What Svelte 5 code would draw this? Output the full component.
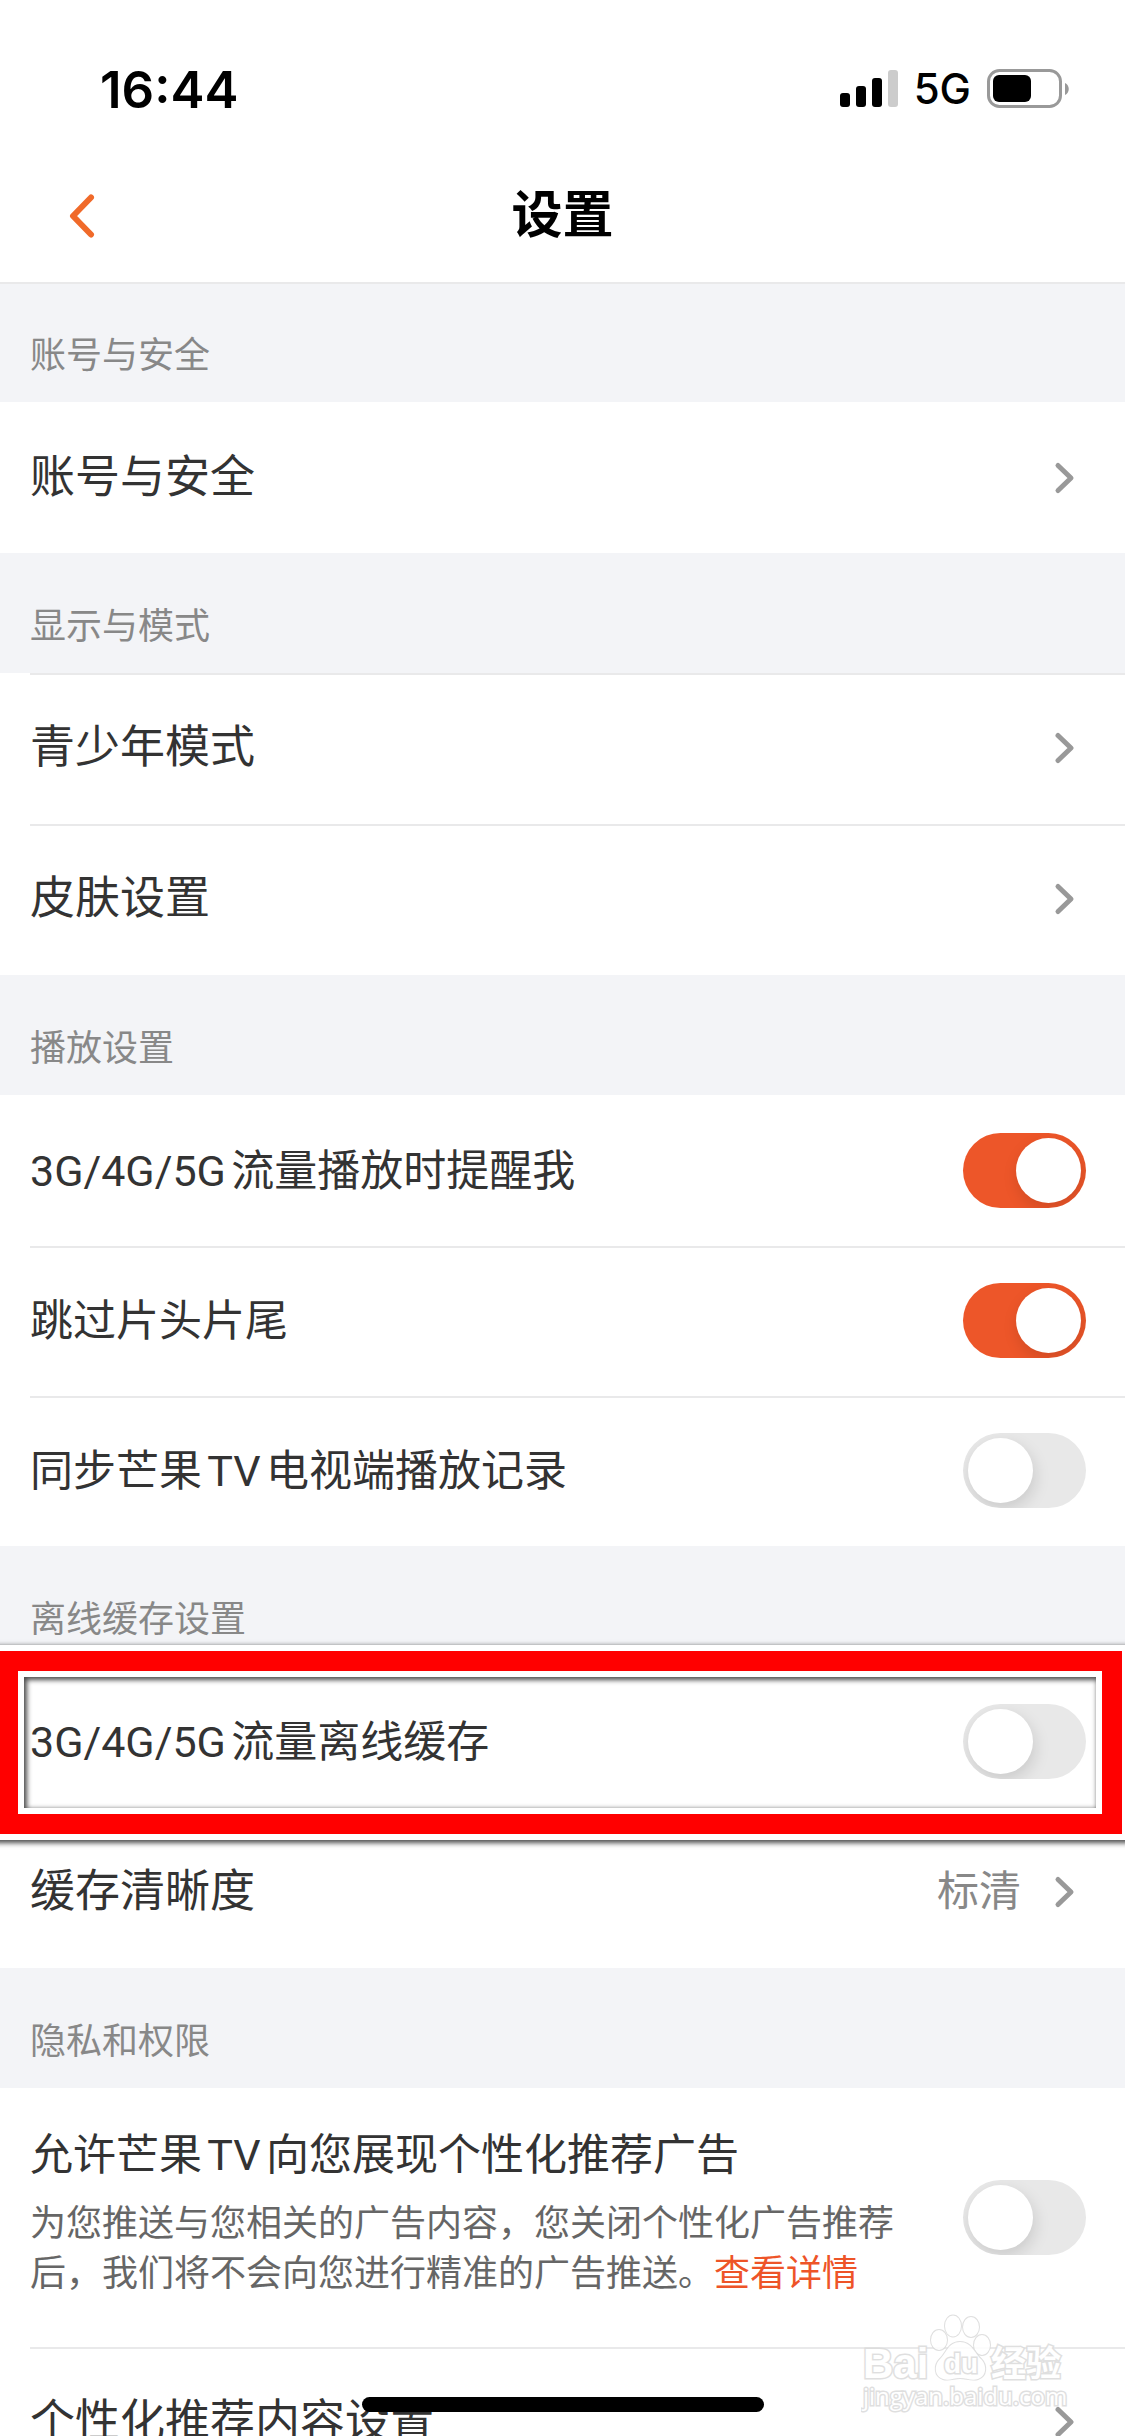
<script lang="ts">
  type Row = {
    id: string;
    label: string;
    type: 'link' | 'switch';
    value?: string;
    on?: boolean;
    marked?: boolean;
    desc?: string;
    more?: string;
  };

  type Section = { title: string; ruled?: boolean; rows: Row[] };

  let sections: Section[] = $state([
    {
      title: '账号与安全',
      rows: [{ id: 'account', label: '账号与安全', type: 'link' }]
    },
    {
      title: '显示与模式',
      ruled: true,
      rows: [
        { id: 'teen', label: '青少年模式', type: 'link' },
        { id: 'skin', label: '皮肤设置', type: 'link' }
      ]
    },
    {
      title: '播放设置',
      rows: [
        { id: 'remind', label: '3G/4G/5G流量播放时提醒我', type: 'switch', on: true },
        { id: 'skip', label: '跳过片头片尾', type: 'switch', on: true },
        { id: 'sync', label: '同步芒果TV电视端播放记录', type: 'switch', on: false }
      ]
    },
    {
      title: '离线缓存设置',
      rows: [
        { id: 'offline', label: '3G/4G/5G流量离线缓存', type: 'switch', on: false, marked: true },
        { id: 'quality', label: '缓存清晰度', type: 'link', value: '标清' }
      ]
    },
    {
      title: '隐私和权限',
      rows: [
        {
          id: 'ads',
          label: '允许芒果TV向您展现个性化推荐广告',
          type: 'switch',
          on: false,
          desc: '为您推送与您相关的广告内容，您关闭个性化广告推荐后，我们将不会向您进行精准的广告推送。',
          more: '查看详情'
        },
        { id: 'recommend', label: '个性化推荐内容设置', type: 'link' }
      ]
    }
  ]);
</script>

<div class="screen">
  <div class="status-bar">
    <span class="time">16:44</span>
    <div class="indicators">
      <svg width="58" height="38" viewBox="0 0 58 38" aria-hidden="true">
        <rect x="0" y="23" width="10" height="14" rx="3" />
        <rect x="16" y="16" width="10" height="21" rx="3" />
        <rect x="32" y="8" width="10" height="29" rx="3" />
        <rect x="48" y="0" width="10" height="37" rx="3" fill="#ccc" />
      </svg>
      <span class="network">5G</span>
      <svg width="82" height="40" viewBox="0 0 82 40" aria-hidden="true">
        <rect x="1.5" y="1.5" width="72" height="36" rx="11" fill="none" stroke="#999" stroke-width="3" />
        <rect x="6" y="6" width="38" height="27" rx="6" />
        <path d="M78 14c5 2 5 10 0 12z" fill="#999" />
      </svg>
    </div>
  </div>

  <header class="nav">
    <button class="back" aria-label="返回">
      <svg width="28" height="46" viewBox="0 0 28 46" fill="none" stroke="#f06a2a" stroke-width="6" stroke-linecap="round" stroke-linejoin="round">
        <path d="M24 4.500L6 23l18 18.500"></path>
      </svg>
    </button>
    <h1>设置</h1>
  </header>

  <main>
    {#each sections as section}
      <section>
        <h2>{section.title}</h2>
        <ul class:ruled={section.ruled}>
          {#each section.rows as row (row.id)}
            <li class:switch-row={row.type === 'switch'}>
              {#if row.type === 'link'}
                <a class="row" href="#{row.id}">
                  <span class="label">{row.label}</span>
                  {#if row.value}<span class="value">{row.value}</span>{/if}
                  <svg class="chevron" width="22" height="34" viewBox="0 0 22 34" fill="none" stroke="#999" stroke-width="5" stroke-linecap="round" stroke-linejoin="round">
                    <path d="M4 4.500L17 17 4 29.500"></path>
                  </svg>
                </a>
              {:else}
                <div class="row" class:tall={row.desc}>
                  <div class="text">
                    <label for={row.id}>{row.label}</label>
                    {#if row.desc}
                      <p>{row.desc}<a href="#detail">{row.more}</a></p>
                    {/if}
                  </div>
                  <input id={row.id} type="checkbox" role="switch" bind:checked={row.on} />
                </div>
              {/if}
              {#if row.marked}<div class="marker"></div>{/if}
            </li>
          {/each}
        </ul>
      </section>
    {/each}
  </main>

  <div class="home-indicator"></div>

  <svg class="watermark" width="210" height="104" viewBox="0 0 210 104" fill="#fff" stroke="#dcdcdc" stroke-width="3" paint-order="stroke" aria-hidden="true">
    <text x="2" y="64" class="wm-brand">Bai</text>
    <ellipse cx="78" cy="26" rx="8" ry="10" stroke-width="2" />
    <ellipse cx="92" cy="12" rx="8" ry="10.500" stroke-width="2" />
    <ellipse cx="110" cy="13" rx="8" ry="10" stroke-width="2" />
    <ellipse cx="121" cy="31" rx="8" ry="10" stroke-width="2" />
    <path d="M99 28c-12 0-14 12-20 17-6 6-6 17 3 20 6 2 11-1 17-1s12 3 18 1c9-3 9-14 3-20-6-5-9-17-21-17z" stroke-width="2" />
    <text x="83" y="59" class="wm-du">du</text>
    <text x="130" y="62" class="wm-cn">经验</text>
    <text x="2" y="91" class="wm-url">jingyan.baidu.com</text>
  </svg>
</div>

<style>
  :global(body) {
    margin: 0;
    background: #fff;
  }

  .screen {
    position: relative;
    display: flex;
    flex-direction: column;
    height: 100vh;
    overflow: hidden;
    background: #fff;
    color: #333;
    font-family: Roboto, 'Noto Sans CJK SC', sans-serif;
    text-autospace: normal;
  }

  .status-bar {
    display: flex;
    flex-shrink: 0;
    align-items: center;
    justify-content: space-between;
    height: 150px;
    box-sizing: border-box;
    padding: 28px 56px 0 100px;
    color: #000;
    font-family: Inter, sans-serif;
  }

  .time {
    font-size: 51px;
    font-weight: 600;
  }

  .indicators {
    display: flex;
    align-items: center;
    gap: 16px;
  }

  .network {
    font-size: 42px;
    font-weight: 500;
    line-height: 48px;
  }

  .nav {
    position: relative;
    display: flex;
    flex-shrink: 0;
    align-items: center;
    justify-content: center;
    height: 132px;
    box-sizing: border-box;
  }

  .nav h1 {
    margin: 0;
    color: #000;
    font-size: 51px;
    font-weight: 700;
    line-height: 72px;
  }

  .back {
    position: absolute;
    left: 43px;
    padding: 24px;
    border: none;
    background: none;
    line-height: 0;
    cursor: pointer;
  }

  main {
    flex: 1;
    min-height: 0;
    overflow: hidden;
  }

  section {
    background: #f3f4f7;
  }

  section:first-child {
    box-shadow: inset 0 2px #e9e9ea;
  }

  h2 {
    height: 120px;
    box-sizing: border-box;
    margin: 0;
    padding: 47px 30px 0;
    color: #888;
    font-size: 36px;
    font-weight: 400;
    line-height: 54px;
  }

  ul {
    margin: 0;
    padding: 0;
    background: #fff;
    list-style: none;
  }

  li {
    position: relative;
    padding-left: 30px;
  }

  .row {
    display: flex;
    align-items: center;
    min-height: 151px;
    box-sizing: border-box;
    color: inherit;
    text-decoration: none;
  }

  li + li .row,
  .ruled .row {
    padding-bottom: 3px;
    border-top: 2px solid #e9e9ea;
  }

  li + .switch-row .row {
    min-height: 150px;
  }

  .label {
    flex: 1;
    font-size: 45px;
    line-height: 66px;
  }

  .value {
    margin-right: 33px;
    color: #888;
    font-size: 42px;
    line-height: 66px;
  }

  .chevron {
    margin-right: 49px;
  }

  .text {
    flex: 1;
    margin-right: 36px;
  }

  label {
    display: block;
    font-size: 43px;
    line-height: 60px;
  }

  .tall {
    min-height: 259px;
  }

  .tall .text {
    padding-bottom: 12px;
  }

  p {
    margin: 14px 0 0;
    color: #666;
    font-size: 36px;
    line-height: 50px;
  }

  p a {
    color: #ee5428;
    text-decoration: none;
  }

  input {
    flex-shrink: 0;
    width: 123px;
    height: 75px;
    margin: 0 39px 0 0;
    padding: 5px;
    box-sizing: border-box;
    border-radius: 38px;
    background: #e8e8e8;
    overflow: hidden;
    appearance: none;
    cursor: pointer;
  }

  input::before {
    content: '';
    display: block;
    width: 65px;
    height: 65px;
    border-radius: 50%;
    background: #fff;
    box-shadow: 2px 6px 16px rgba(0, 0, 0, 0.13);
  }

  input:checked {
    background: #ed5629;
  }

  input:checked::before {
    margin-left: auto;
  }

  /* red callout frame around the highlighted row */
  .marker {
    position: absolute;
    z-index: 1;
    top: -15px;
    right: 3px;
    bottom: -17px;
    left: -2px;
    border: 20px solid #f00;
    box-shadow:
      0 0 0 6px #fff,
      2px 2px 5px 7px rgba(0, 0, 0, 0.7),
      inset 0 0 0 6px #fff,
      inset 2px 2px 5px 7px rgba(0, 0, 0, 0.7);
    pointer-events: none;
  }

  .home-indicator {
    position: absolute;
    bottom: 24px;
    left: 50%;
    width: 402px;
    height: 15px;
    border-radius: 8px;
    background: #000;
    transform: translateX(-50%);
  }

  .watermark {
    position: absolute;
    right: 54px;
    bottom: 18px;
    opacity: 0.9;
  }

  .wm-brand {
    font: 700 42px 'Liberation Sans', sans-serif;
  }

  .wm-du {
    font: 700 28px 'Liberation Sans', sans-serif;
  }

  .wm-cn {
    font: 700 35px 'Noto Sans CJK SC', sans-serif;
  }

  .wm-url {
    font: 400 24px 'Open Sans', sans-serif;
  }
</style>
